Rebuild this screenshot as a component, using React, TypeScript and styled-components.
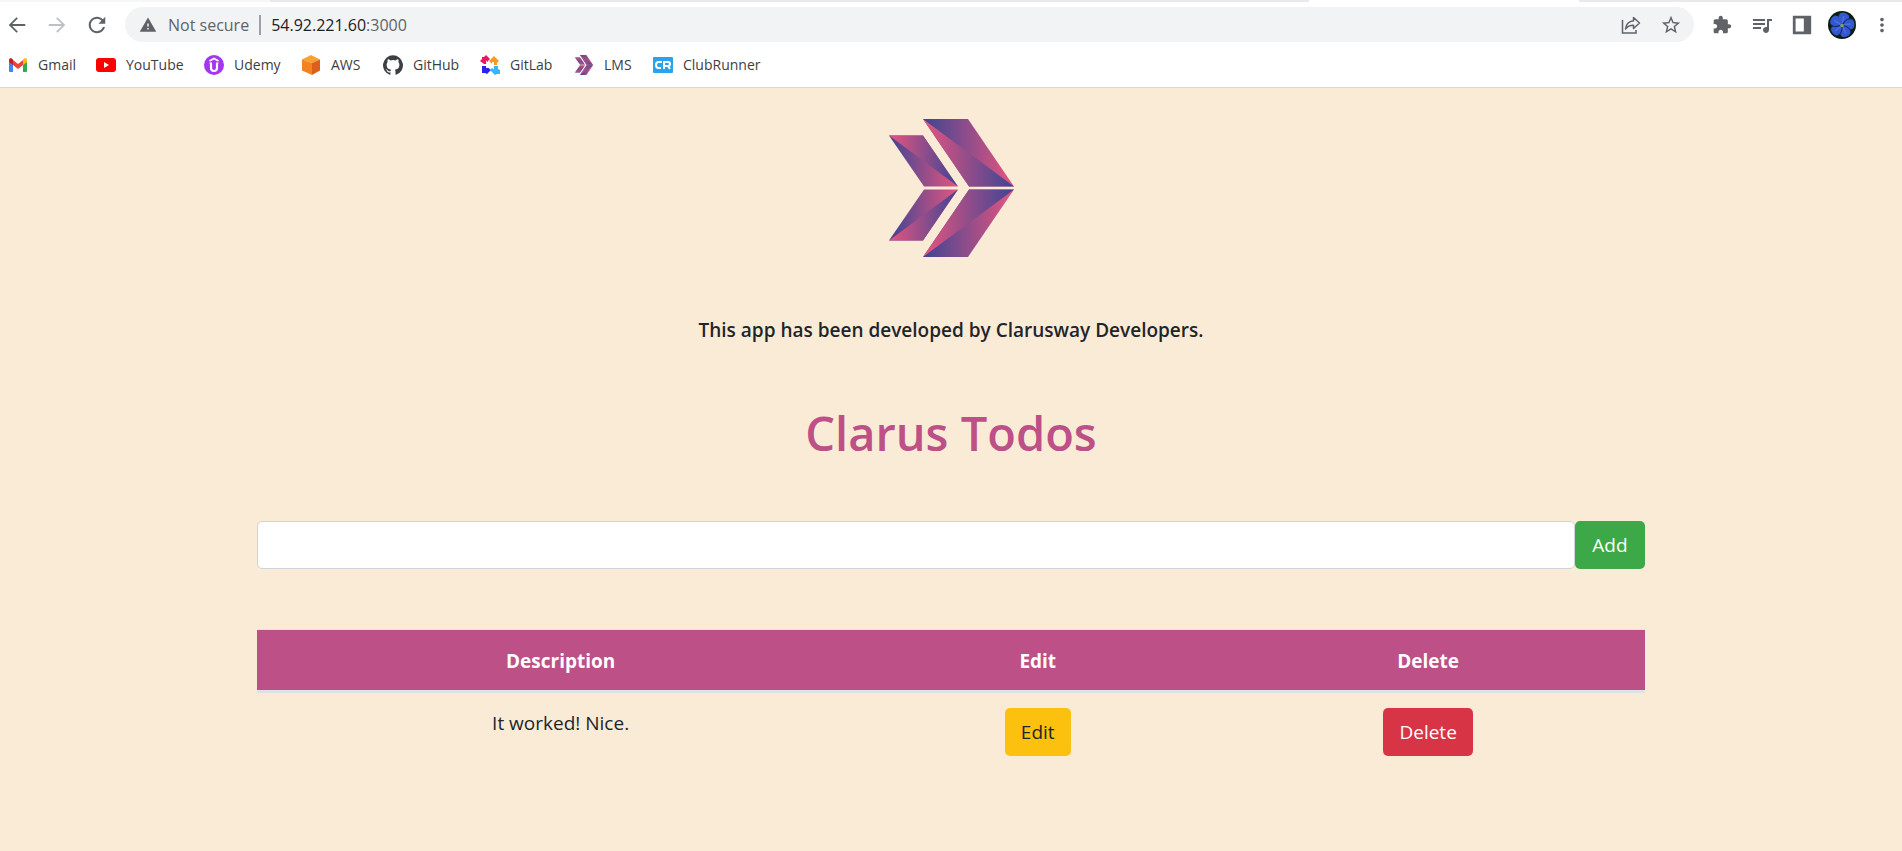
import React, { useState } from "react";
import styled, { createGlobalStyle } from "styled-components";

const GlobalStyle = createGlobalStyle`
  * { box-sizing: border-box; }
  html, body, #root { height: 100%; }
  body {
    margin: 0;
    background: #faebd7;
    color: #212529;
    font-family: "Open Sans", "Noto Sans", sans-serif;
    font-size: 19px;
    line-height: 30px;
  }
`;

const Shell = styled.div`
  display: flex;
  flex-direction: column;
  min-height: 100%;
`;

const Browser = styled.header`
  background: #fff;
  border-bottom: 1px solid #d5d7da;
  color: #3c4043;
  font-size: 14px;
  line-height: 20px;
`;

const TabStrip = styled.div`
  display: flex;
  height: 2px;
  background: #e8e8ed;
  justify-content: space-between;
`;

const TabEdge = styled.span<{ $offset?: string; $tone: string }>`
  width: 270px;
  margin-right: ${(p) => p.$offset ?? "0"};
  background: ${(p) => p.$tone};
`;

const Toolbar = styled.div`
  display: flex;
  align-items: center;
  gap: 16px;
  height: 42px;
  padding: 3px 8px 0 5px;
`;

const IconButton = styled.button<{ $tone?: string }>`
  display: flex;
  justify-content: center;
  width: 24px;
  padding: 0;
  border: 0;
  background: none;
  color: ${(p) => p.$tone ?? "#5f6368"};
  svg { flex: none; }
`;

const Actions = styled.div`
  display: flex;
  align-items: center;
  gap: 16px;
`;

const Omnibox = styled.div`
  display: flex;
  flex: 1;
  align-items: center;
  gap: 10px;
  height: 35px;
  padding: 0 11px 0 14px;
  border-radius: 18px;
  background: #f1f3f4;
`;

const Security = styled.span`
  display: flex;
  align-items: center;
  gap: 11px;
  padding-right: 10px;
  border-right: 2px solid #9aa0a6;
  color: #5f6368;
  font-size: 16px;
`;

const Url = styled.a`
  flex: 1;
  color: #202124;
  font-size: 16px;
  text-decoration: none;
  span { color: #5f6368; }
`;

const Bookmarks = styled.nav`
  display: flex;
  gap: 20px;
  height: 43px;
  align-items: center;
  padding: 0 8px 2px;
`;

const Bookmark = styled.a<{ $width: string }>`
  display: flex;
  align-items: center;
  gap: 10px;
  width: ${(p) => p.$width};
  color: #3c4043;
  text-decoration: none;
  white-space: nowrap;
  svg { flex: none; }
`;

const Page = styled.main`
  display: flex;
  flex-direction: column;
  align-items: center;
  width: 100%;
  max-width: 1428px;
  margin: 0 auto;
  padding: 31px 20px;
  text-align: center;
`;

const Credit = styled.h5`
  margin: 60px 0 0;
  font-size: 19px;
  font-weight: 600;
  line-height: 26px;
`;

const Title = styled.h1`
  margin: 60px 0 58px;
  color: #bc5087;
  font-size: 47px;
  font-weight: 600;
  line-height: 60px;
`;

const TodoForm = styled.form`
  display: flex;
  width: 100%;
`;

const TodoInput = styled.input`
  flex: 1;
  min-width: 0;
  height: 48px;
  padding: 8px 15px;
  border: 1px solid #ced4da;
  border-radius: 5px;
  background: #fff;
  font: inherit;
`;

const Button = styled.button<{ $bg: string; $fg?: string }>`
  height: 48px;
  padding: 0 16px;
  border: 0;
  border-radius: 5px;
  background: ${(p) => p.$bg};
  color: ${(p) => p.$fg ?? "#fff"};
  font: inherit;
`;

const AddButton = styled(Button)`
  width: 70px;
`;

const TodoTable = styled.table`
  width: 100%;
  margin-top: 60px;
  border-collapse: collapse;
  table-layout: fixed;
  th {
    padding: 16px 15px 14px;
    background: #bc5087;
    border-top: 1px solid #dee2e6;
    border-bottom: 3px solid #dee2e6;
    color: #fff;
    font-weight: 700;
  }
  td {
    padding: 15px;
    vertical-align: top;
  }
`;

const Column = styled.col<{ $share: string }>`
  width: ${(p) => p.$share};
`;

type LogoProps = { width: number; height: number };

function ClarusLogo({ width, height }: LogoProps) {
  const halves = (
    <>
      <path d="M0 16.500 34 16.500 69 67.500 35 67.500Z" fill="url(#blueFirst)" />
      <path d="M0 16.500 34 16.500 48 37 Q58 52 69 67.500Z" fill="url(#pinkFirst)" />
      <path d="M34 0 79 0 125 67.500 80 67.500Z" fill="url(#blueFirst)" />
      <path d="M34 0 80 67.500 125 67.500Z" fill="url(#pinkFirst)" />
    </>
  );
  return (
    <svg width={width} height={height} viewBox="0 0 125 138" role="img" aria-label="Clarusway">
      <defs>
        <linearGradient id="pinkFirst">
          <stop offset="0" stopColor="#e6557f" />
          <stop offset="1" stopColor="#3d4594" />
        </linearGradient>
        <linearGradient id="blueFirst">
          <stop offset="0" stopColor="#3d4594" />
          <stop offset="1" stopColor="#e6557f" />
        </linearGradient>
      </defs>
      {halves}
      <g transform="matrix(1 0 0 -1 0 138)">{halves}</g>
    </svg>
  );
}

function Glyph({ d, size = 22 }: { d: string; size?: number }) {
  return (
    <svg width={size} height={size} viewBox="0 0 24 24" fill="currentColor" aria-hidden="true">
      <path d={d} />
    </svg>
  );
}

const glyphs = {
  back: "M21 11H6.830l6.090-6.090L11.500 3.500 3 12l8.500 8.500 1.410-1.410L6.830 13H21v-2z",
  forward: "M12.500 3.500l-1.410 1.410L17.170 11H3v2h14.170l-6.090 6.090 1.420 1.410L21 12z",
  reload:
    "M18.360 5.640C16.730 4.010 14.490 3 12 3c-4.970 0-8.990 4.030-8.990 9S7.030 21 12 21c4.190 0 7.690-2.870 8.690-6.750h-2.340C17.430 16.870 14.930 18.750 12 18.750c-3.730 0-6.750-3.020-6.750-6.750S8.270 5.250 12 5.250c1.860 0 3.530.77 4.750 2L13.500 10.500h7.500V3l-2.640 2.640z",
  warning: "M1 21h22L12 2 1 21zm12-3h-2v-2h2v2zm0-4h-2v-4h2v4z",
  star: "M22 9.240l-7.190-.62L12 2 9.190 8.630 2 9.240l5.460 4.730L5.820 21 12 17.270 18.180 21l-1.630-7.030L22 9.240zM12 15.400l-3.760 2.270 1-4.280-3.320-2.880 4.380-.38L12 6.100l1.710 4.040 4.380.38-3.320 2.880 1 4.280L12 15.400z",
  puzzle:
    "M20.500 11H19V7c0-1.100-.9-2-2-2h-4V3.500C13 2.120 11.880 1 10.500 1S8 2.120 8 3.500V5H4c-1.100 0-1.990.9-1.990 2v3.800H3.500c1.490 0 2.700 1.210 2.700 2.700s-1.210 2.700-2.700 2.700H2V20c0 1.100.9 2 2 2h3.800v-1.500c0-1.490 1.210-2.700 2.700-2.700 1.490 0 2.700 1.210 2.700 2.700V22H17c1.100 0 2-.9 2-2v-4h1.500c1.380 0 2.500-1.120 2.500-2.500S21.880 11 20.500 11z",
  queue:
    "M15 6H3v2h12V6zm0 4H3v2h12v-2zM3 16h8v-2H3v2zM17 6v8.180c-.31-.11-.65-.18-1-.18-1.660 0-3 1.340-3 3s1.340 3 3 3 3-1.340 3-3V8h3V6h-5z",
  panel: "M2 2h20v20H2zM5 5v14h9V5z",
  more: "M12 8c1.100 0 2-.9 2-2s-.9-2-2-2-2 .9-2 2 .9 2 2 2zm0 2c-1.100 0-2 .9-2 2s.9 2 2 2 2-.9 2-2-.9-2-2-2zm0 6c-1.100 0-2 .9-2 2s.9 2 2 2 2-.9 2-2-.9-2-2-2z",
  github:
    "M12 .3a12 12 0 0 0-3.800 23.380c.6.110.83-.260.83-.570v-2.230c-3.340.730-4.030-1.420-4.030-1.420-.550-1.390-1.330-1.760-1.330-1.760-1.090-.740.080-.730.080-.730 1.200.080 1.840 1.240 1.840 1.240 1.070 1.830 2.810 1.300 3.490 1 .110-.780.420-1.310.760-1.610-2.670-.300-5.470-1.330-5.470-5.930 0-1.310.470-2.380 1.240-3.220-.140-.300-.540-1.520.100-3.180 0 0 1.010-.320 3.300 1.230a11.500 11.500 0 0 1 6.010 0c2.280-1.550 3.290-1.230 3.290-1.230.640 1.660.240 2.880.120 3.180a4.650 4.650 0 0 1 1.230 3.220c0 4.610-2.800 5.620-5.480 5.920.420.360.810 1.100.810 2.220v3.290c0 .320.220.690.830.570A12 12 0 0 0 12 .3",
};

function ShareIcon() {
  return (
    <svg width="20" height="20" viewBox="0 0 20 20" fill="none" stroke="currentColor" strokeWidth="1.500" aria-hidden="true">
      <path d="M1.500 5v13h13.500v-3" />
      <path d="M12.500 2.500 18.500 8l-6 5.500v-3.200c-3.500 0-6 1-8 3.700.5-4.500 3-7.500 8-8.200z" strokeLinejoin="round" />
    </svg>
  );
}

function Avatar() {
  return (
    <svg width="28" height="28" viewBox="0 0 28 28" aria-hidden="true">
      <circle cx="14" cy="14" r="14" fill="#0b1d12" />
      {[0, 72, 144, 216, 288].map((angle) => (
        <g key={angle} transform={`rotate(${angle + 12} 14 14)`}>
          <path d="M14 14C9 10 7.500 6 9.500 3q4.500-3 9 0C20.500 6 19 10 14 14z" fill="#3459cf" />
          <path d="M14 12V5" stroke="#4a6fe0" strokeWidth="1.500" />
          <path d="M14 14C9 10 7.500 6 9.500 3" fill="none" stroke="#152a70" strokeWidth="1" />
        </g>
      ))}
      <circle cx="14" cy="14.500" r="1.800" fill="#8aa05a" />
    </svg>
  );
}

function GmailIcon() {
  return (
    <svg width="20" height="20" viewBox="0 0 20 20" aria-hidden="true">
      <path d="M1 5v11q0 1 1 1h3V8z" fill="#4285f4" />
      <path d="M19 5v11q0 1-1 1h-3V8z" fill="#34a853" />
      <path d="M5 5l5 4 5-4v5l-5 4-5-4z" fill="#ea4335" />
      <path d="M1 5q0-2 2-2l2 1.500V10L1 7z" fill="#c5221f" />
      <path d="M19 5q0-2-2-2l-2 1.500V10l4-3z" fill="#fbbc04" />
    </svg>
  );
}

function YouTubeIcon() {
  return (
    <svg width="20" height="20" viewBox="0 0 20 20" aria-hidden="true">
      <rect y="3" width="20" height="14" rx="3" fill="#f00" />
      <path d="M8 7v6l5-3z" fill="#fff" />
    </svg>
  );
}

function UdemyIcon() {
  return (
    <svg width="20" height="20" viewBox="0 0 20 20" fill="none" stroke="#fff" aria-hidden="true">
      <circle cx="10" cy="10" r="10" fill="#a435f0" stroke="none" />
      <path d="M5.500 6 10 3.500 14.500 6" strokeWidth="1.800" />
      <path d="M7 8v5q0 3 3 3t3-3V8" strokeWidth="2.200" />
      <path d="M5.500 8H8M12 8h2.500" strokeWidth="1" />
    </svg>
  );
}

function AwsIcon() {
  return (
    <svg width="20" height="20" viewBox="0 0 20 20" aria-hidden="true">
      <path d="M10 0l9 4.500L11 8 1 4.500z" fill="#f8a032" />
      <path d="M1 4.500 11 8v12L1 15.500z" fill="#f58220" />
      <path d="M11 8l8-3.500v11L11 20z" fill="#dd5f1b" />
    </svg>
  );
}

function GitLabIcon() {
  return (
    <svg width="20" height="20" viewBox="0 0 20 20" aria-hidden="true">
      <path d="M0 6l2-2V2h2l2-2 4 4-2 2v3H4z" fill="#e5195f" />
      <path d="M9 6l5-5 5 5-2 2v2h-4z" fill="#f59b23" />
      <path d="M2 11h4l5 4-4 4-2-1H2z" fill="#2b22f0" />
      <path d="M10 15l4-4h4v3l2 1v4h-3l-2 1z" fill="#37b6ff" />
      <path d="M7 13V7.500l6 5V7" fill="none" stroke="#fff" strokeWidth="1.800" />
    </svg>
  );
}

function ClubRunnerIcon() {
  return (
    <svg width="20" height="20" viewBox="0 0 20 20" aria-hidden="true">
      <rect y="2" width="20" height="16" rx="1" fill="#2ba3ec" />
      <path d="M9 7H5.500Q3 7 3 10t2.500 3H8M11 14V7h4q2 0 2 2t-2 2h-3m3 0 2 3" fill="none" stroke="#fff" strokeWidth="2" />
    </svg>
  );
}

const bookmarks = [
  { name: "Gmail", width: "68px", icon: <GmailIcon /> },
  { name: "YouTube", width: "88px", icon: <YouTubeIcon /> },
  { name: "Udemy", width: "77px", icon: <UdemyIcon /> },
  { name: "AWS", width: "62px", icon: <AwsIcon /> },
  { name: "GitHub", width: "77px", icon: <Glyph d={glyphs.github} size={20} /> },
  { name: "GitLab", width: "74px", icon: <GitLabIcon /> },
  { name: "LMS", width: "59px", icon: <ClarusLogo width={20} height={20} /> },
  { name: "ClubRunner", width: "110px", icon: <ClubRunnerIcon /> },
];

function BrowserBar() {
  return (
    <Browser>
      <TabStrip>
        <TabEdge $tone="#f6f6f6" />
        <TabEdge $tone="#fff" $offset="17%" />
      </TabStrip>
      <Toolbar>
        <Actions>
          <IconButton aria-label="Back"><Glyph d={glyphs.back} /></IconButton>
          <IconButton aria-label="Forward" $tone="#bdc1c6"><Glyph d={glyphs.forward} /></IconButton>
          <IconButton aria-label="Reload"><Glyph d={glyphs.reload} /></IconButton>
        </Actions>
        <Omnibox>
          <Security><Glyph d={glyphs.warning} size={18} />Not secure</Security>
          <Url href="#">54.92.221.60<span>:3000</span></Url>
          <Actions>
            <IconButton aria-label="Share"><ShareIcon /></IconButton>
            <IconButton aria-label="Bookmark this page"><Glyph d={glyphs.star} /></IconButton>
          </Actions>
        </Omnibox>
        <Actions>
          <IconButton aria-label="Extensions"><Glyph d={glyphs.puzzle} size={20} /></IconButton>
          <IconButton aria-label="Media queue"><Glyph d={glyphs.queue} size={24} /></IconButton>
          <IconButton aria-label="Side panel"><Glyph d={glyphs.panel} /></IconButton>
          <IconButton aria-label="Profile"><Avatar /></IconButton>
          <IconButton aria-label="Menu"><Glyph d={glyphs.more} /></IconButton>
        </Actions>
      </Toolbar>
      <Bookmarks aria-label="Bookmarks">
        {bookmarks.map((b) => (
          <Bookmark key={b.name} href="#" $width={b.width}>{b.icon}{b.name}</Bookmark>
        ))}
      </Bookmarks>
    </Browser>
  );
}

export default function App() {
  const [draft, setDraft] = useState("");
  return (
    <Shell>
      <GlobalStyle />
      <BrowserBar />
      <Page>
        <ClarusLogo width={125} height={138} />
        <Credit>This app has been developed by Clarusway Developers.</Credit>
        <Title>Clarus Todos</Title>
        <TodoForm onSubmit={(e) => e.preventDefault()}>
          <TodoInput aria-label="New todo" value={draft} onChange={(e) => setDraft(e.target.value)} />
          <AddButton type="submit" $bg="#3da848">Add</AddButton>
        </TodoForm>
        <TodoTable>
          <colgroup>
            <Column $share="43.75%" />
            <Column $share="25%" />
            <Column $share="31.25%" />
          </colgroup>
          <thead>
            <tr><th>Description</th><th>Edit</th><th>Delete</th></tr>
          </thead>
          <tbody>
            <tr>
              <td>It worked! Nice.</td>
              <td><Button type="button" $bg="#fcc10f" $fg="#212529">Edit</Button></td>
              <td><Button type="button" $bg="#d73546">Delete</Button></td>
            </tr>
          </tbody>
        </TodoTable>
      </Page>
    </Shell>
  );
}
